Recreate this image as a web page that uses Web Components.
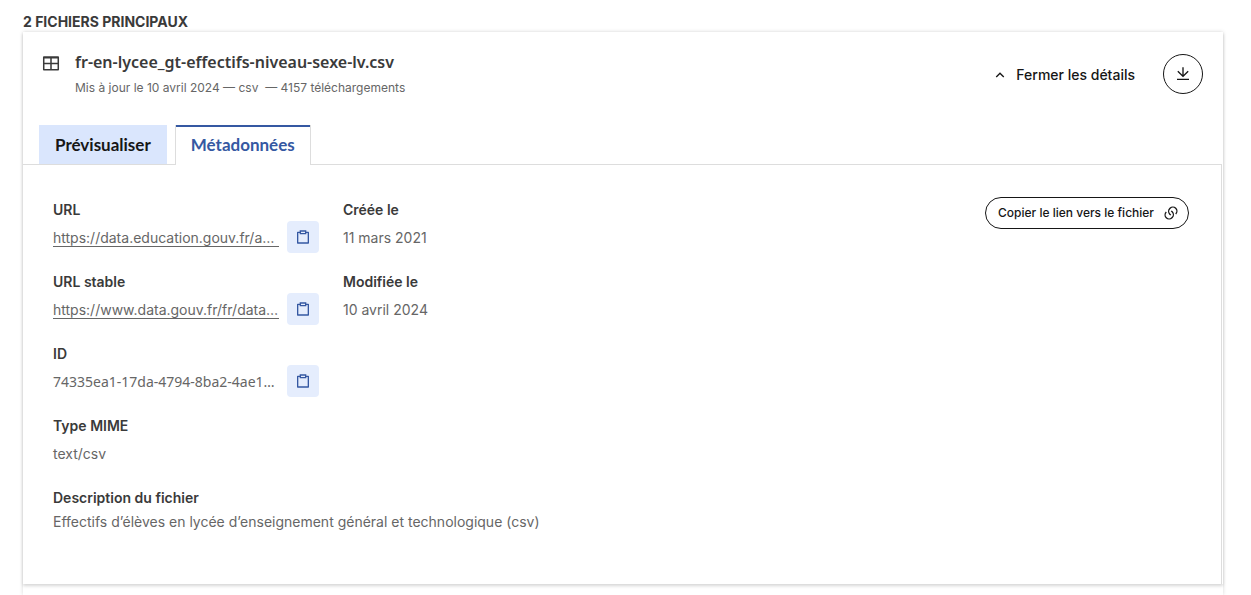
<!DOCTYPE html>
<html lang="fr">
<head>
  <meta charset="utf-8">
  <meta name="viewport" content="width=device-width, initial-scale=1">
  <title>Fichiers principaux</title>
  <style>
    body {
      margin: 0;
      background: #fff;
      color: #3a3a3a;
      font-family: Inter, "Noto Sans", sans-serif;
      font-size: 14px;
      line-height: 24px;
      --title-font: "Noto Sans", sans-serif;
      --tab-font: Lato, sans-serif;
    }

    code {
      font-family: var(--title-font);
      font-size: 14px;
    }
  </style>
</head>
<body>
  <resource-group heading="2 fichiers principaux">
    <resource-card name="fr-en-lycee_gt-effectifs-niveau-sexe-lv.csv">
      <span slot="meta">Mis à jour le 10 avril 2024 — csv &nbsp;— 4157 téléchargements</span>
      <resource-tabs slot="tabs"></resource-tabs>
      <meta-field label="URL" copy><meta-link href="#url">https://data.education.gouv.fr/a…</meta-link></meta-field>
      <meta-field label="URL stable" copy><meta-link href="#stable">https://www.data.gouv.fr/fr/data…</meta-link></meta-field>
      <meta-field label="ID" copy><code>74335ea1-17da-4794-8ba2-4ae1…</code></meta-field>
      <meta-field label="Type MIME">text/csv</meta-field>
      <meta-field slot="dates" label="Créée le">11 mars 2021</meta-field>
      <meta-field slot="dates" label="Modifiée le">10 avril 2024</meta-field>
      <meta-field slot="description" label="Description du fichier" compact>Effectifs d’élèves en lycée d’enseignement général et technologique (csv)</meta-field>
    </resource-card>
  </resource-group>

  <script>
    const reset = `
      *, :host { box-sizing: border-box; }
      button { margin: 0; font: inherit; color: inherit; background: none; border: 0; cursor: pointer; }
      svg { display: block; flex: none; fill: currentColor; }
    `;

    const icons = {
      table: "M2.5 3h19A1.2 1.2 0 0 1 22.7 4.2v16.6a1.2 1.2 0 0 1-1.2 1.2h-19a1.2 1.2 0 0 1-1.2-1.2V4.2A1.2 1.2 0 0 1 2.5 3zM3.3 6v5.5H11V6zM13 6v5.5h7.7V6zM3.3 13.5V20H11v-6.5zM13 13.5V20h7.7v-6.5z",
      arrowUp: "M12 10.8 7.05 15.75 5.64 14.34 12 7.98l6.36 6.36-1.41 1.41z",
      download: "M3 19h18v2H3zM13 13.17l6.07-6.07 1.42 1.41L12 17 3.51 8.51 4.93 7.1 11 13.17V2h2z",
      clipboard: "M7 4V2h10v2h3.01c.55 0 .99.44.99.99v16.02c0 .55-.44.99-.99.99H3.99A.99.99 0 0 1 3 21.01V4.99C3 4.44 3.44 4 3.99 4H7zm0 2H5v14h14V6h-2v2H7V6zm2-2v2h6V4H9z",
      link: "M13.06 8.11l1.41 1.42a7 7 0 0 1 0 9.9l-.35.35a7 7 0 1 1-9.9-9.9l1.41 1.42a5 5 0 1 0 7.08 7.07l.35-.35a5 5 0 0 0 0-7.08l-1.41-1.41 1.41-1.42zm6.72 6.01-1.41-1.42a5 5 0 1 0-7.08-7.07l-.35.35a5 5 0 0 0 0 7.08l1.41 1.41-1.41 1.42-1.41-1.42a7 7 0 0 1 0-9.9l.35-.35a7 7 0 1 1 9.9 9.9z"
    };

    const icon = (name, size) =>
      `<svg viewBox="0 0 24 24" width="${size}" height="${size}" fill-rule="evenodd" aria-hidden="true"><path d="${icons[name]}"/></svg>`;

    class ResourceGroup extends HTMLElement {
      constructor() {
        super();
        this.attachShadow({ mode: "open" });
      }

      connectedCallback() {
        this.shadowRoot.innerHTML = `
          <style>
            ${reset}
            :host { display: block; padding: 12px 28px 0 23px; }
            h2 {
              margin: 0;
              font-size: 14px;
              line-height: 20px;
              font-weight: 700;
              text-transform: uppercase;
            }
            .list {
              min-height: calc(100vh - 32px);
              box-shadow: 0 0 4px rgba(0, 0, 0, 0.16);
              clip-path: inset(-4px -4px 0 -4px);
            }
          </style>
          <h2>${this.getAttribute("heading")}</h2>
          <div class="list"><slot></slot></div>
        `;
      }
    }

    class ResourceCard extends HTMLElement {
      constructor() {
        super();
        this.attachShadow({ mode: "open" });
      }

      connectedCallback() {
        this.shadowRoot.innerHTML = `
          <style>
            ${reset}
            :host {
              display: block;
              background: #fff;
              box-shadow: 0 2px 3px rgba(0, 0, 0, 0.16);
            }
            header {
              display: flex;
              justify-content: space-between;
              align-items: flex-start;
              padding: 18px 20px 25px 19px;
            }
            .file { display: flex; gap: 15px; }
            .file svg { margin-top: 4px; }
            h3 {
              margin: 0;
              font-family: var(--title-font);
              font-size: 16px;
              line-height: 24px;
              font-weight: 600;
            }
            .meta { padding-top: 2px; font-size: 12px; line-height: 24px; color: #666; }
            .actions {
              display: flex;
              align-items: center;
              gap: 28px;
              padding-top: 4px;
              color: #161616;
            }
            .toggle {
              display: flex;
              align-items: center;
              gap: 8px;
              padding: 2px 0 0;
              font-weight: 500;
            }
            .download {
              display: flex;
              align-items: center;
              justify-content: center;
              width: 40px;
              height: 40px;
              padding: 0;
              border: 1px solid #161616;
              border-radius: 50%;
            }
            .panel {
              display: flex;
              justify-content: space-between;
              align-items: flex-start;
              margin-right: 1px;
              padding: 32px 32px 51px 30px;
              border-right: 1px solid #ddd;
            }
            .fields { display: flex; flex-direction: column; gap: 16px; }
            .columns { display: flex; gap: 24px; }
            .column { display: flex; flex-direction: column; gap: 16px; }
            .column:first-child { width: 266px; }
            .share {
              display: flex;
              align-items: center;
              gap: 9px;
              height: 32px;
              padding: 0 9px 0 12px;
              border: 1px solid #161616;
              border-radius: 16px;
              color: #161616;
              font-size: 12px;
              font-weight: 500;
            }
          </style>
          <header>
            <div class="file">
              ${icon("table", 18)}
              <div>
                <h3>${this.getAttribute("name")}</h3>
                <div class="meta"><slot name="meta"></slot></div>
              </div>
            </div>
            <div class="actions">
              <button class="toggle" type="button" aria-expanded="true">${icon("arrowUp", 16)}Fermer les détails</button>
              <button class="download" type="button" aria-label="Télécharger">${icon("download", 16)}</button>
            </div>
          </header>
          <slot name="tabs"></slot>
          <section class="panel">
            <div class="fields">
              <div class="columns">
                <div class="column"><slot></slot></div>
                <div class="column"><slot name="dates"></slot></div>
              </div>
              <slot name="description"></slot>
            </div>
            <button class="share" type="button">Copier le lien vers le fichier ${icon("link", 16)}</button>
          </section>
        `;
      }
    }

    class ResourceTabs extends HTMLElement {
      constructor() {
        super();
        this.attachShadow({ mode: "open" });
      }

      connectedCallback() {
        this.shadowRoot.innerHTML = `
          <style>
            ${reset}
            :host { display: block; }
            div {
              display: flex;
              gap: 8px;
              margin-right: 1px;
              padding: 0 16px;
              border-bottom: 1px solid #ddd;
            }
            button {
              height: 39px;
              padding: 0 16px;
              background: #dae6fd;
              color: #161616;
              font-family: var(--tab-font);
              font-size: 17px;
              font-weight: 700;
            }
            button[aria-selected="true"] {
              height: 40px;
              margin-bottom: -1px;
              padding: 0 15px;
              border: solid #ddd;
              border-width: 0 1px;
              background: linear-gradient(#3558a2, #3558a2) border-box 0 0 / 100% 2px no-repeat #fff;
              color: #3558a2;
            }
          </style>
          <div role="tablist">
            <button type="button" role="tab" aria-selected="false">Prévisualiser</button>
            <button type="button" role="tab" aria-selected="true">Métadonnées</button>
          </div>
        `;
      }
    }

    class MetaField extends HTMLElement {
      constructor() {
        super();
        this.attachShadow({ mode: "open" });
      }

      connectedCallback() {
        const label = this.getAttribute("label");
        const copy = this.hasAttribute("copy")
          ? `<button type="button" aria-label="Copier ${label}">${icon("clipboard", 16)}</button>`
          : "";
        this.shadowRoot.innerHTML = `
          <style>
            ${reset}
            :host { display: block; }
            .label { padding-top: 2px; line-height: 22px; font-weight: 600; }
            .value { display: flex; align-items: center; gap: 8px; min-height: 32px; color: #666; }
            :host([compact]) .value { min-height: 24px; }
            .text { flex: 1; min-width: 0; padding-top: 2px; line-height: 22px; white-space: nowrap; }
            button {
              display: flex;
              align-items: center;
              justify-content: center;
              width: 32px;
              height: 32px;
              padding: 0;
              border-radius: 4px;
              background: #e5edfd;
              color: #3558a2;
            }
          </style>
          <div class="label">${label}</div>
          <div class="value"><div class="text"><slot></slot></div>${copy}</div>
        `;
      }
    }

    class MetaLink extends HTMLElement {
      constructor() {
        super();
        this.attachShadow({ mode: "open" });
      }

      connectedCallback() {
        this.shadowRoot.innerHTML = `
          <style>
            :host { display: block; }
            a {
              display: block;
              line-height: 16px;
              color: inherit;
              text-decoration: none;
              border-bottom: 1px solid #666;
            }
          </style>
          <a href="${this.getAttribute("href")}"><slot></slot></a>
        `;
      }
    }

    customElements.define("resource-group", ResourceGroup);
    customElements.define("resource-card", ResourceCard);
    customElements.define("resource-tabs", ResourceTabs);
    customElements.define("meta-field", MetaField);
    customElements.define("meta-link", MetaLink);
  </script>
</body>
</html>
